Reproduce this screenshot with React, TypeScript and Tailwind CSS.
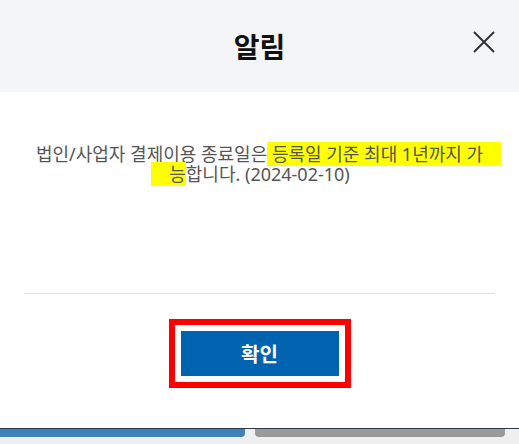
export default function App() {
  return (
    <div
      className="flex h-[444px] w-[519px] flex-col bg-white"
      style={{ fontFamily: '"Noto Sans CJK KR", "Noto Sans", sans-serif' }}
    >
      {/* header */}
      <div className="relative flex h-[92px] shrink-0 items-center justify-center bg-[#f4f5f7]">
        <h1 className="text-[28px] font-bold leading-none text-[#111]">알림</h1>
        <button className="absolute right-[24px] top-[31px] h-[22px] w-[22px]">
          <svg viewBox="0 0 22 22" className="h-[22px] w-[22px]" fill="none" stroke="#333" strokeWidth="2">
            <path d="M1 1 L21 21 M21 1 L1 21" />
          </svg>
        </button>
      </div>

      {/* body */}
      <div
        className="flex h-[201px] shrink-0 flex-col items-center pt-[52px] text-[18px] leading-[20px] text-[#555]"
        style={{ fontFamily: '"Noto Sans", "Noto Sans CJK KR", sans-serif' }}
      >
        <p className="whitespace-nowrap text-center">
          법인/사업자 결제이용 종료일은
          <span className="-mr-[18px] bg-[#ffff00] pr-[18px]"> 등록일 기준 최대 1년까지 가</span>
        </p>
        <p className="whitespace-nowrap text-center">
          <span className="-ml-[18px] bg-[#ffff00] pl-[18px]">능</span>합니다. (2024-02-10)
        </p>
      </div>

      <div className="mx-[24px] h-px shrink-0 bg-[#dddddd]" />

      {/* footer */}
      <div className="flex h-[134px] shrink-0 justify-center pt-[25px]">
        <div className="h-[69px] border-[6px] border-[#ff0000] bg-white p-[6px]">
          <button className="h-[45px] w-[158px] bg-[#0063b0] text-[20px] font-bold text-white">확인</button>
        </div>
      </div>

      {/* background page strip */}
      <div className="h-px shrink-0 bg-[#2b3a4a]" />
      <div className="flex h-[15px] shrink-0 gap-[10px] bg-[#efefef]">
        <div className="h-[8px] w-[245px] rounded-br-[4px] bg-[#3c82b8]" />
        <div className="h-[8px] w-[250px] rounded-b-[4px] bg-[#9a9a9a]" />
      </div>
    </div>
  );
}
